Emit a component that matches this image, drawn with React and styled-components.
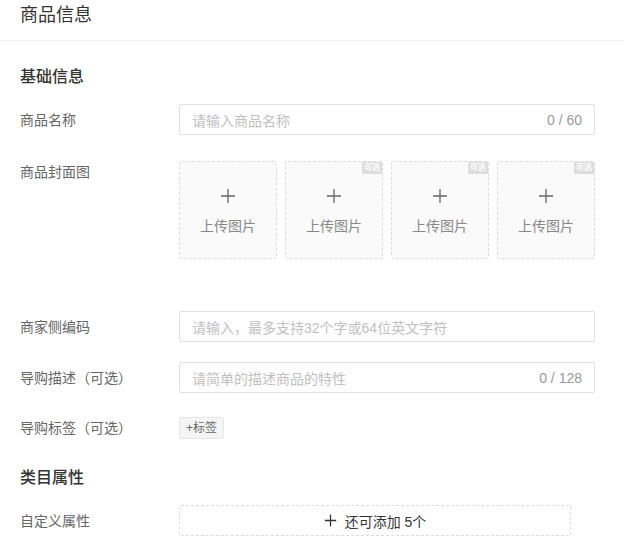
import React from 'react';
import styled, { createGlobalStyle } from 'styled-components';

const GlobalStyle = createGlobalStyle`
  * { box-sizing: border-box; }
  body {
    margin: 0;
    background: #fff;
    font-family: "Liberation Sans", "Noto Sans CJK SC", sans-serif;
    font-size: 14px;
    color: #333;
  }
`;

const Page = styled.div`
  width: 624px;
  background: #fff;
`;

const Header = styled.div`
  height: 41px;
  padding: 0 20px;
  line-height: 30px;
  font-size: 18px;
  color: #333;
  border-bottom: 1px solid #eee;
`;

const Body = styled.div`
  padding: 0 29px 0 20px;
`;

const SectionTitle = styled.div`
  margin-top: ${props => props.top}px;
  line-height: 22px;
  font-size: 16px;
  font-weight: 500;
  color: #333;
`;

const Row = styled.div`
  display: flex;
  align-items: ${props => (props.top ? 'flex-start' : 'center')};
  margin-top: ${props => props.gap}px;
`;

const Label = styled.div`
  width: 159px;
  flex-shrink: 0;
  font-size: 14px;
  line-height: 20px;
  color: #666;
  padding-top: ${props => (props.top ? 1 : 0)}px;
`;

const InputBox = styled.div`
  flex: 1;
  height: 31px;
  display: flex;
  align-items: center;
  padding: 0 12px;
  border: 1px solid #e0e0e0;
  border-radius: 2px;
  background: #fff;
`;

const Placeholder = styled.span`
  flex: 1;
  color: #c0c0c0;
  font-size: 14px;
  white-space: nowrap;
`;

const Counter = styled.span`
  color: #999;
  font-size: 14px;
`;

const UploadGrid = styled.div`
  display: grid;
  grid-template-columns: repeat(4, 98px);
  gap: 8px;
`;

const UploadCard = styled.div`
  position: relative;
  height: 98px;
  display: flex;
  flex-direction: column;
  align-items: center;
  justify-content: center;
  gap: 14px;
  padding-top: 2px;
  background: #fafafa;
  border: 1px dashed #dcdcdc;
  border-radius: 3px;
`;

const UploadText = styled.span`
  font-size: 14px;
  line-height: 16px;
  color: #888;
`;

const Badge = styled.span`
  position: absolute;
  top: 0;
  right: 0;
  width: 20px;
  height: 12px;
  background: #ddd;
  color: #fff;
  font-size: 8px;
  font-weight: 700;
  line-height: 12px;
  text-align: center;
`;

const TagRow = styled.div`
  height: 30px;
  display: flex;
  align-items: center;
`;

const TagButton = styled.button`
  height: 22px;
  padding: 0 6px;
  border: 1px solid #e6e6e6;
  border-radius: 2px;
  background: #f5f5f5;
  color: #666;
  font-family: inherit;
  font-size: 12px;
  line-height: 20px;
  cursor: pointer;
`;

const AddBox = styled.div`
  width: 392px;
  height: 31px;
  display: flex;
  align-items: center;
  justify-content: center;
  gap: 8px;
  border: 1px dashed #dcdcdc;
  border-radius: 2px;
  color: #333;
  font-size: 14px;
`;

const Plus = ({ size = 16, color = '#666', width = 1.3 }) => (
  <svg width={size} height={size} viewBox="0 0 16 16">
    <path d="M8 1V15M1 8H15" stroke={color} strokeWidth={width} fill="none" />
  </svg>
);

const TextInput = ({ placeholder, count }) => (
  <InputBox>
    <Placeholder>{placeholder}</Placeholder>
    {count && <Counter>{count}</Counter>}
  </InputBox>
);

const covers = [false, true, true, true];

export default function App() {
  return (
    <Page>
      <GlobalStyle />
      <Header>商品信息</Header>
      <Body>
        <SectionTitle top={25}>基础信息</SectionTitle>

        <Row gap={16}>
          <Label>商品名称</Label>
          <TextInput placeholder="请输入商品名称" count="0 / 60" />
        </Row>

        <Row gap={26} top>
          <Label top>商品封面图</Label>
          <UploadGrid>
            {covers.map((optional, i) => (
              <UploadCard key={i}>
                {optional && <Badge>可选</Badge>}
                <Plus />
                <UploadText>上传图片</UploadText>
              </UploadCard>
            ))}
          </UploadGrid>
        </Row>

        <Row gap={52}>
          <Label>商家侧编码</Label>
          <TextInput placeholder="请输入，最多支持32个字或64位英文字符" />
        </Row>

        <Row gap={20}>
          <Label>导购描述（可选）</Label>
          <TextInput placeholder="请简单的描述商品的特性" count="0 / 128" />
        </Row>

        <Row gap={20}>
          <Label>导购标签（可选）</Label>
          <TagRow>
            <TagButton>+标签</TagButton>
          </TagRow>
        </Row>

        <SectionTitle top={24}>类目属性</SectionTitle>

        <Row gap={16}>
          <Label>自定义属性</Label>
          <AddBox>
            <Plus size={13} color="#333" width={1.6} />
            还可添加 5个
          </AddBox>
        </Row>
      </Body>
    </Page>
  );
}
